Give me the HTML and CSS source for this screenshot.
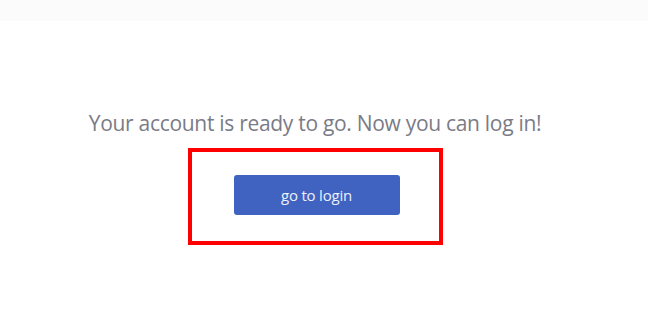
FILE: index.html
```html
<!DOCTYPE html>
<html lang="en">
<head>
<meta charset="utf-8">
<title>Account ready</title>
<link rel="stylesheet" href="styles.css">
</head>
<body>
<header class="topbar"></header>
<main class="content">
  <p class="message">Your account is ready to go. Now you can log in!</p>
  <div class="highlight">
    <button class="login-btn" type="button">go to login</button>
  </div>
</main>
</body>
</html>
```
FILE: styles.css
```css
html, body {
  margin: 0;
  padding: 0;
  background: #ffffff;
}
body {
  font-family: "Open Sans", "Liberation Sans", sans-serif;
  width: 648px;
  height: 334px;
  overflow: hidden;
}
.topbar {
  height: 21px;
  background: #fbfbfb;
}
.content {
  display: flex;
  flex-direction: column;
  align-items: center;
  padding-top: 88px;
  padding-right: 18px;
}
.message {
  margin: 0;
  font-size: 21px;
  line-height: 28px;
  color: #7a7b86;
  font-weight: 400;
  letter-spacing: -0.3px;
}
.highlight {
  margin-top: 11px;
  box-sizing: border-box;
  width: 255px;
  height: 97px;
  border: 4px solid #ff0000;
  display: flex;
  justify-content: center;
  padding-top: 23px;
  padding-left: 3px;
}
.login-btn {
  width: 166px;
  height: 40px;
  border: 0;
  border-radius: 3px;
  background: #4062c1;
  color: #eef1fa;
  font-family: "Open Sans", "Liberation Sans", sans-serif;
  font-size: 15px;
  letter-spacing: -0.2px;
  padding: 0;
  cursor: pointer;
}
```
